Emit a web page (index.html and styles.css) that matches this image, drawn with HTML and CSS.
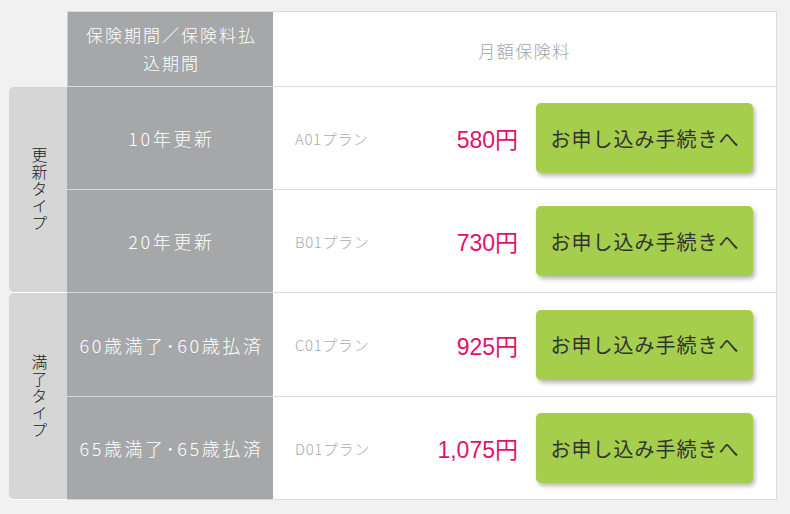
FILE: index.html
```html
<!DOCTYPE html>
<html lang="ja">
<head>
<meta charset="utf-8">
<title>月額保険料</title>
<link rel="stylesheet" href="styles.css">
</head>
<body>
<div class="plans">
  <div class="corner"></div>
  <div class="head-term">保険期間／保険料払<br>込期間</div>
  <div class="head-fee">月額保険料</div>

  <div class="cat"><span>更新タイプ</span></div>
  <div class="term">10年更新</div>
  <div class="offer">
    <span class="plan">A01プラン</span>
    <span class="price">580円</span>
    <a class="apply" href="#">お申し込み手続きへ</a>
  </div>
  <div class="term">20年更新</div>
  <div class="offer">
    <span class="plan">B01プラン</span>
    <span class="price">730円</span>
    <a class="apply" href="#">お申し込み手続きへ</a>
  </div>

  <div class="cat"><span>満了タイプ</span></div>
  <div class="term">60歳満了･60歳払済</div>
  <div class="offer">
    <span class="plan">C01プラン</span>
    <span class="price">925円</span>
    <a class="apply" href="#">お申し込み手続きへ</a>
  </div>
  <div class="term">65歳満了･65歳払済</div>
  <div class="offer">
    <span class="plan">D01プラン</span>
    <span class="price">1,075円</span>
    <a class="apply" href="#">お申し込み手続きへ</a>
  </div>
</div>
</body>
</html>
```

FILE: styles.css
```css
html, body {
  margin: 0;
  padding: 0;
  background: #f1f1f1;
}

body {
  font-family: "Noto Sans CJK JP", "Noto Sans", sans-serif;
  color: #333;
}

.plans {
  display: grid;
  grid-template-columns: 58px 206px 504px;
  grid-template-rows: 76px 103px 103px 104px 103px;
  margin: 11px 0 0 9px;
  width: 768px;
}

.plans > div {
  box-sizing: border-box;
}

.corner {
  grid-column: 1;
}

.head-term {
  grid-column: 2;
  background: #a6a7a9;
  color: #fff;
  border-top: 1px solid #dcdcdc;
  border-left: 1px solid #cfcfcf;
  border-bottom: 1px solid #dcdcdc;
  font-size: 17px;
  font-weight: 300;
  letter-spacing: 2px;
  line-height: 28px;
  display: flex;
  align-items: center;
  justify-content: center;
  text-align: center;
  padding-left: 2px;
}

.head-fee {
  grid-column: 3;
  background: #fff;
  border-top: 1px solid #dcdcdc;
  border-right: 1px solid #dcdcdc;
  border-bottom: 1px solid #dcdcdc;
  color: #a3a3a3;
  font-size: 17px;
  font-weight: 300;
  letter-spacing: 1.5px;
  display: flex;
  align-items: center;
  justify-content: center;
  padding-top: 2px;
}

.cat {
  grid-column: 1;
  grid-row: span 2;
  background: #d6d6d6;
  border-radius: 5px 0 0 5px;
  border-bottom: 1px solid #fff;
  display: flex;
  align-items: center;
  justify-content: center;
  padding-left: 3px;
}

.cat span {
  writing-mode: vertical-rl;
  text-orientation: upright;
  font-size: 16px;
  font-weight: 300;
  letter-spacing: 1px;
  color: #222;
}

.term {
  grid-column: 2;
  background: #a6a7a9;
  color: #fff;
  border-bottom: 1px solid #d8d8d8;
  font-size: 18px;
  font-weight: 300;
  letter-spacing: 2.6px;
  display: flex;
  align-items: center;
  justify-content: center;
  white-space: nowrap;
  padding-left: 3px;
}

.offer {
  grid-column: 3;
  background: #fff;
  border-right: 1px solid #dcdcdc;
  border-bottom: 1px solid #dcdcdc;
  display: flex;
  align-items: center;
  padding: 0 23px 0 22px;
}

.plan {
  color: #ababab;
  font-size: 15px;
  font-weight: 300;
  letter-spacing: 0.6px;
}

.price {
  flex: 1;
  text-align: right;
  color: #e3106b;
  font-family: "Liberation Sans", "Noto Sans CJK JP", sans-serif;
  font-size: 23px;
}

.apply {
  margin-left: 18px;
  width: 217px;
  height: 70px;
  background: #a5ce4d;
  border-radius: 5px;
  box-shadow: 2px 3px 4px rgba(0, 0, 0, 0.28);
  color: #333;
  text-decoration: none;
  font-size: 20px;
  letter-spacing: 1px;
  display: flex;
  align-items: center;
  justify-content: center;
  padding-left: 1px;
  box-sizing: border-box;
}
```
